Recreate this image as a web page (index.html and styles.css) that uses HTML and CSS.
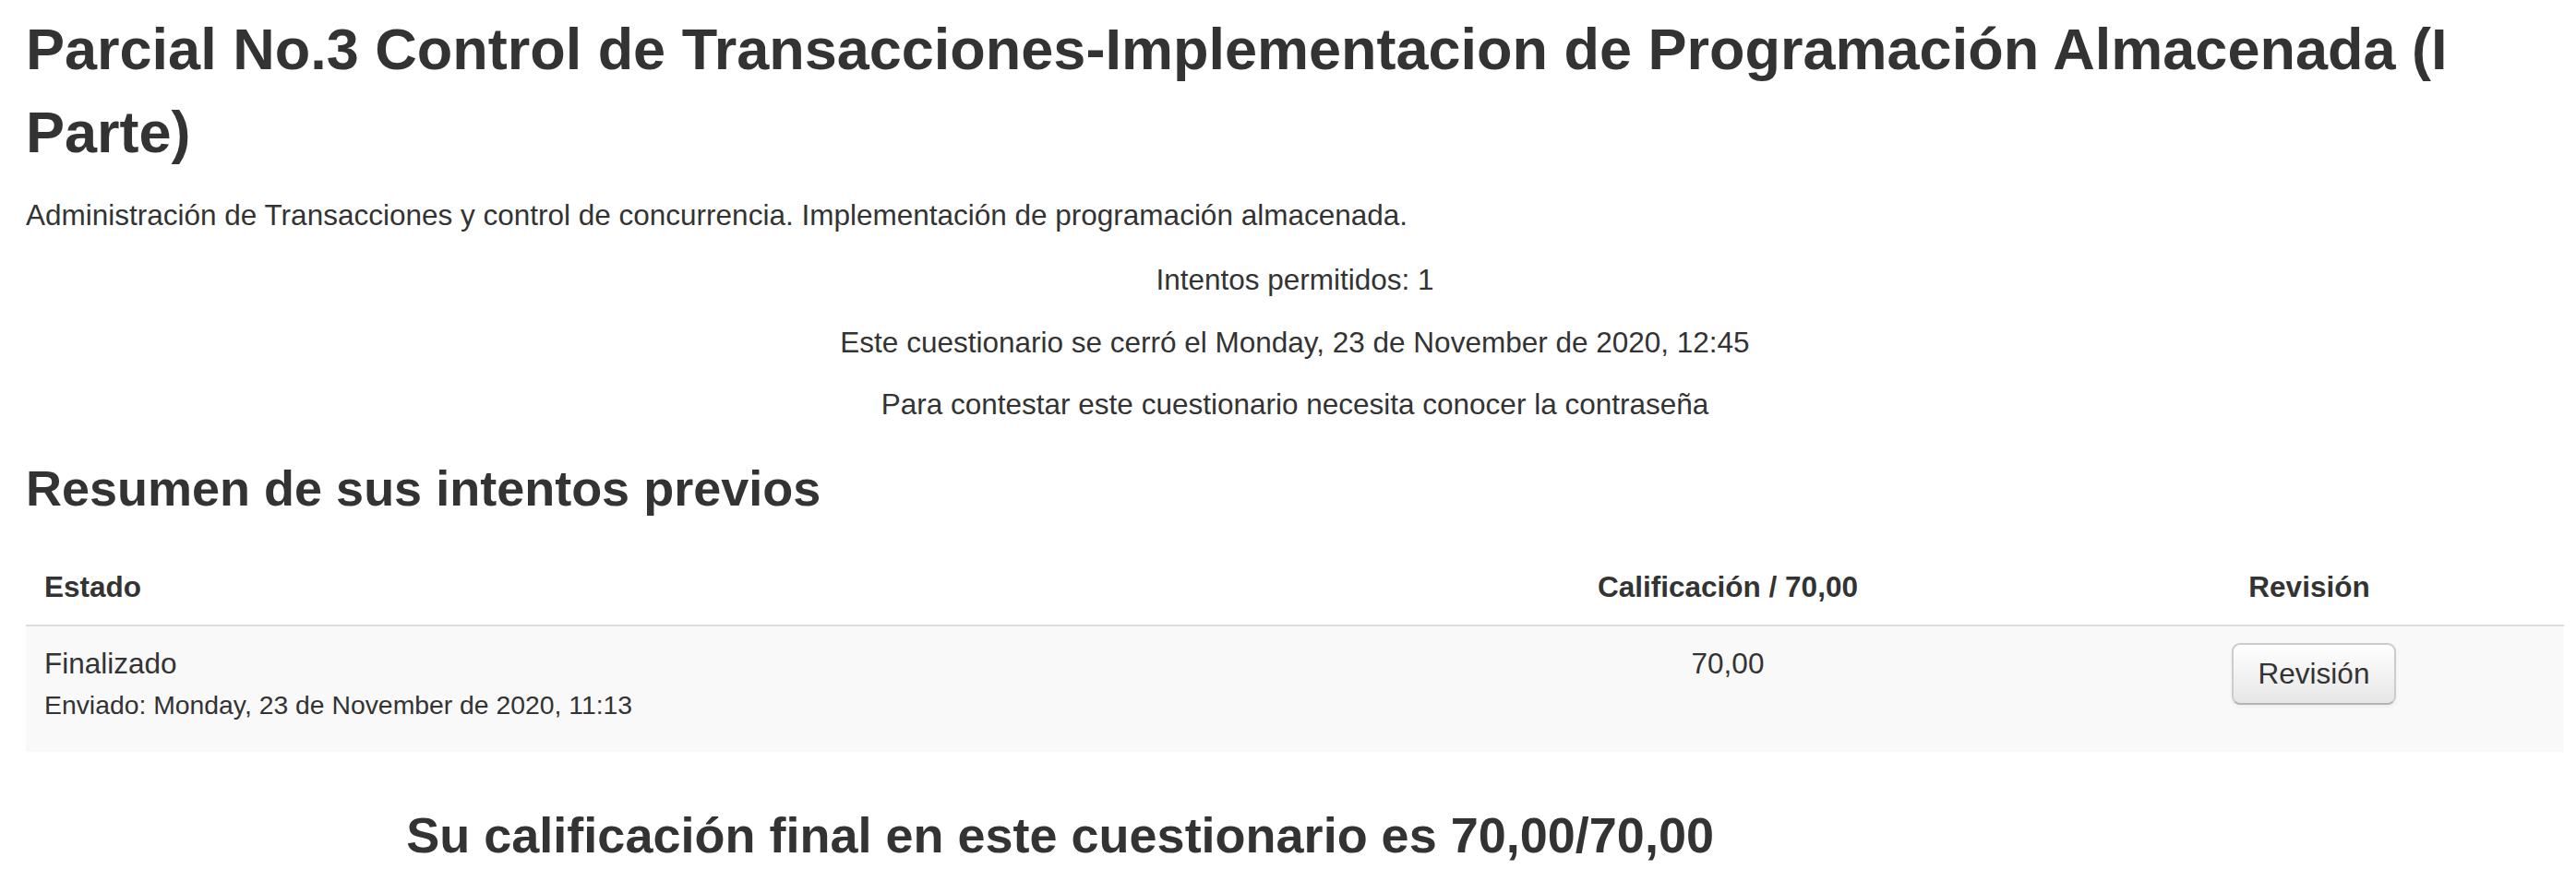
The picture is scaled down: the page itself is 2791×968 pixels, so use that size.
FILE: index.html
```html
<!DOCTYPE html>
<html lang="es">
<head>
<meta charset="utf-8">
<title>Parcial No.3</title>
<link rel="stylesheet" href="styles.css">
</head>
<body>
<div class="page">
  <h2 class="title">Parcial No.3 Control de Transacciones-Implementacion de Programación Almacenada (I Parte)</h2>
  <div class="intro">
    <p>Administración de Transacciones y control de concurrencia. Implementación de programación almacenada.</p>
  </div>
  <div class="quizinfo">
    <p>Intentos permitidos: 1</p>
    <p>Este cuestionario se cerró el Monday, 23 de November de 2020, 12:45</p>
    <p>Para contestar este cuestionario necesita conocer la contraseña</p>
  </div>
  <h3 class="section">Resumen de sus intentos previos</h3>
  <table class="attempts">
    <colgroup>
      <col class="c-state">
      <col class="c-grade">
      <col class="c-review">
    </colgroup>
    <thead>
      <tr>
        <th class="left">Estado</th>
        <th class="center">Calificación / 70,00</th>
        <th class="center">Revisión</th>
      </tr>
    </thead>
    <tbody>
      <tr>
        <td class="left">Finalizado<span class="details">Enviado: Monday, 23 de November de 2020, 11:13</span></td>
        <td class="center">70,00</td>
        <td class="center"><button class="btn" type="button">Revisión</button></td>
      </tr>
    </tbody>
  </table>
  <div class="feedback">
    <h3 class="section">Su calificación final en este cuestionario es 70,00/70,00</h3>
  </div>
</div>
</body>
</html>
```
FILE: styles.css
```css
html, body {
  margin: 0;
  padding: 0;
  background: #ffffff;
}
body {
  font-family: "Liberation Sans", Arial, Helvetica, sans-serif;
  font-size: 31.5px;
  line-height: 45px;
  color: #333333;
}
.page {
  padding: 8px 13px 0 28px;
}
.title {
  margin: 0 0 23px 0;
  font-size: 63px;
  line-height: 90px;
  font-weight: bold;
  color: #333333;
}
.intro p {
  margin: 0 0 25px 0;
}
.quizinfo {
  text-align: center;
}
.quizinfo p {
  margin: 0 0 22.5px 0;
}
.section {
  margin: 22.5px 0;
  font-size: 54px;
  line-height: 90px;
  font-weight: bold;
  color: #333333;
}
.attempts {
  width: 100%;
  border-collapse: collapse;
  border-spacing: 0;
  margin: 0 0 45px 0;
  table-layout: fixed;
}
.c-state { width: 1490px; }
.c-grade { width: 708px; }
.c-review { width: 552px; }
.attempts th {
  padding: 18px 20px;
  font-weight: bold;
  vertical-align: bottom;
  border-bottom: 2px solid #dddddd;
}
.attempts td {
  padding: 18px 20px 28px 20px;
  vertical-align: top;
  background: #f9f9f9;
}
.left { text-align: left; }
.center { text-align: center; }
.details {
  display: block;
  font-size: 28.35px;
}
.btn {
  display: inline-block;
  margin: 0 0 0 10px;
  padding: 9px 27px;
  font-family: "Liberation Sans", Arial, Helvetica, sans-serif;
  font-size: 31.5px;
  line-height: 45px;
  color: #333333;
  background-color: #f5f5f5;
  background-image: linear-gradient(to bottom, #ffffff, #e6e6e6);
  border: 2px solid #cccccc;
  border-bottom-color: #b3b3b3;
  border-radius: 9px;
  box-shadow: inset 0 2px 0 rgba(255,255,255,0.2), 0 2px 4px rgba(0,0,0,0.05);
  cursor: pointer;
}
.feedback {
  width: 81.5%;
  text-align: center;
}
```
